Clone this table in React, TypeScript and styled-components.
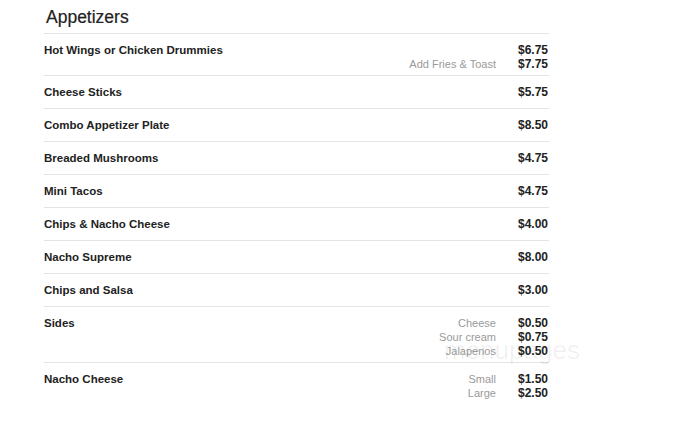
import React from "react";
import styled, { createGlobalStyle } from "styled-components";

const Global = createGlobalStyle`
  html, body { margin: 0; padding: 0; background: #fff; }
  body { font-family: Arial, "Liberation Sans", Helvetica, sans-serif; color: #222; }
`;

const Page = styled.div`
  position: relative;
  width: 676px;
  height: 434px;
  overflow: hidden;
  padding: 0 0 0 44px;
  box-sizing: border-box;
`;

const Menu = styled.div`
  width: 505px;
`;

const Title = styled.h2`
  margin: 0;
  padding: 7px 0 0 2px;
  height: 33px;
  box-sizing: border-box;
  font-size: 17.5px;
  font-weight: normal;
  line-height: 20px;
  color: #222;
  -webkit-text-stroke: 0.2px #222;
`;

const Row = styled.div`
  display: flex;
  justify-content: space-between;
  border-top: 1px solid #e4e4e4;
  padding: 9px 0 4px 0;
  min-height: 33px;
  box-sizing: border-box;
`;

const Name = styled.div`
  font-size: 11.5px;
  font-weight: bold;
  line-height: 14px;
  color: #222;
`;

const Prices = styled.div`
  display: flex;
  flex-direction: column;
  align-items: flex-end;
  margin-right: 1px;
`;

const PriceLine = styled.div`
  display: flex;
  align-items: baseline;
  line-height: 14px;
`;

const Label = styled.span`
  font-size: 11px;
  color: #9a9a9a;
  text-align: right;
  margin-right: 22px;
`;

const Price = styled.span`
  font-size: 12px;
  font-weight: bold;
  color: #222;
  min-width: 30px;
  text-align: right;
`;

const Watermark = styled.div`
  position: absolute;
  left: 444px;
  top: 336px;
  font-size: 26px;
  line-height: 28px;
  color: rgba(0, 0, 0, 0.06);
  font-family: Arial, "Liberation Sans", sans-serif;
  pointer-events: none;
`;

type Opt = { label?: string; price: string };
type Item = { name: string; options: Opt[] };

const items: Item[] = [
  { name: "Hot Wings or Chicken Drummies", options: [{ price: "$6.75" }, { label: "Add Fries & Toast", price: "$7.75" }] },
  { name: "Cheese Sticks", options: [{ price: "$5.75" }] },
  { name: "Combo Appetizer Plate", options: [{ price: "$8.50" }] },
  { name: "Breaded Mushrooms", options: [{ price: "$4.75" }] },
  { name: "Mini Tacos", options: [{ price: "$4.75" }] },
  { name: "Chips & Nacho Cheese", options: [{ price: "$4.00" }] },
  { name: "Nacho Supreme", options: [{ price: "$8.00" }] },
  { name: "Chips and Salsa", options: [{ price: "$3.00" }] },
  {
    name: "Sides",
    options: [
      { label: "Cheese", price: "$0.50" },
      { label: "Sour cream", price: "$0.75" },
      { label: "Jalapenos", price: "$0.50" },
    ],
  },
  {
    name: "Nacho Cheese",
    options: [
      { label: "Small", price: "$1.50" },
      { label: "Large", price: "$2.50" },
    ],
  },
];

export default function App() {
  return (
    <Page>
      <Global />
      <Menu>
        <Title>Appetizers</Title>
        {items.map((it) => (
          <Row key={it.name}>
            <Name>{it.name}</Name>
            <Prices>
              {it.options.map((o, i) => (
                <PriceLine key={i}>
                  {o.label && <Label>{o.label}</Label>}
                  <Price>{o.price}</Price>
                </PriceLine>
              ))}
            </Prices>
          </Row>
        ))}
      </Menu>
      <Watermark>menupages</Watermark>
    </Page>
  );
}
